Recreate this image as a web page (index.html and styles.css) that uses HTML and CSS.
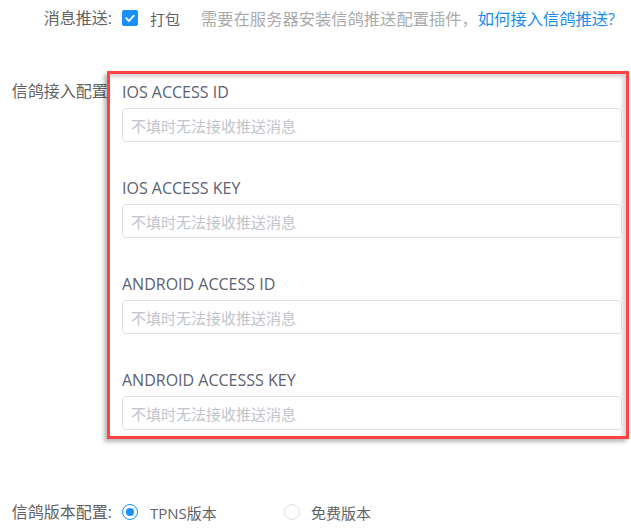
FILE: index.html
```html
<!DOCTYPE html>
<html lang="zh-CN">
<head>
<meta charset="utf-8">
<title>信鸽配置</title>
<link rel="stylesheet" href="styles.css">
</head>
<body>
<div class="form">
  <div class="row row-push">
    <div class="label">消息推送:</div>
    <div class="content inline">
      <span class="checkbox"><svg width="16" height="16" viewBox="0 0 16 16"><path d="M4.2 8.2 L7 11 L11.8 5.6" fill="none" stroke="#fff" stroke-width="1.8" stroke-linecap="round" stroke-linejoin="round"/></svg></span>
      <span class="check-text">打包</span>
      <span class="desc">需要在服务器安装信鸽推送配置插件，<a class="link" href="#">如何接入信鸽推送?</a></span>
    </div>
  </div>

  <div class="row row-access">
    <div class="label label-access">信鸽接入配置:</div>
    <div class="content">
      <div class="annot">
        <div class="field">
          <div class="field-label">IOS ACCESS ID</div>
          <input class="input" type="text" placeholder="不填时无法接收推送消息">
        </div>
        <div class="field">
          <div class="field-label">IOS ACCESS KEY</div>
          <input class="input" type="text" placeholder="不填时无法接收推送消息">
        </div>
        <div class="field">
          <div class="field-label">ANDROID ACCESS ID</div>
          <input class="input" type="text" placeholder="不填时无法接收推送消息">
        </div>
        <div class="field">
          <div class="field-label">ANDROID ACCESSS KEY</div>
          <input class="input" type="text" placeholder="不填时无法接收推送消息">
        </div>
      </div>
    </div>
  </div>

  <div class="row row-version">
    <div class="label">信鸽版本配置:</div>
    <div class="content inline">
      <span class="radio-item radio-first"><span class="radio checked"></span><span class="radio-text">TPNS版本</span></span>
      <span class="radio-item"><span class="radio"></span><span class="radio-text">免费版本</span></span>
    </div>
  </div>
</div>
</body>
</html>
```

FILE: styles.css
```css
* { box-sizing: border-box; }
html, body { margin: 0; padding: 0; background: #fff; }
body {
  font-family: "Open Sans", "Noto Sans CJK SC", sans-serif;
  font-size: 16px;
  color: #606266;
  width: 631px;
  height: 530px;
  overflow: hidden;
}
.form { display: flex; flex-direction: column; }
.row { display: flex; align-items: flex-start; }
.label {
  width: 112px;
  flex: none;
  text-align: right;
  line-height: 24px;
  white-space: nowrap;
}
.content { margin-left: 10px; flex: 1; min-width: 0; }
.inline { display: flex; align-items: center; height: 24px; white-space: nowrap; }

.row-push { padding-top: 6px; }
.checkbox {
  width: 16px; height: 16px; border-radius: 2px;
  background: #1890ff; display: inline-flex; flex: none;
}
.checkbox svg { display: block; }
.check-text { margin-left: 12px; font-size: 15px; }
.desc { margin-left: 21px; color: #aaaaaa; font-size: 16.3px; }
.link { color: #1a8cf0; text-decoration: none; }

.row-access { margin-top: 41px; position: relative; }
.label-access { padding-top: 8px; }
.annot {
  margin-left: -15px;
  width: 522px;
  border: 3px solid #ff4141;
  padding: 6px 4px 6px 12px;
  box-shadow: -3px 3px 4px rgba(0,0,0,0.28), inset -3px 3px 4px rgba(0,0,0,0.18);
  background: #fff;
  position: relative;
}
.field + .field { margin-top: 34px; }
.field-label { line-height: 24px; font-size: 16px; color: #5b6170; }
.input {
  display: block;
  margin-top: 4px;
  width: 100%;
  height: 34px;
  border: 1px solid #dcdfe6;
  border-radius: 4px;
  padding: 0 8px;
  font-family: "Noto Sans CJK SC", "Open Sans", sans-serif;
  font-size: 15px;
  color: #606266;
  background: #fff;
  outline: none;
}
.input::placeholder { color: #c0c4cc; }

.row-version { margin-top: 61px; }
.radio-item { display: inline-flex; align-items: center; }
.radio-first { width: 162px; }
.radio {
  width: 16px; height: 16px; border-radius: 50%;
  border: 1px solid #dcdfe6; background: #fff;
  display: inline-flex; align-items: center; justify-content: center; flex: none;
}
.radio.checked { border-color: #1890ff; }
.radio.checked::after {
  content: ""; width: 8px; height: 8px; border-radius: 50%; background: #1890ff;
}
.radio-text { margin-left: 12px; font-size: 15px; }
.radio-item + .radio-item .radio-text { margin-left: 11px; }
```
